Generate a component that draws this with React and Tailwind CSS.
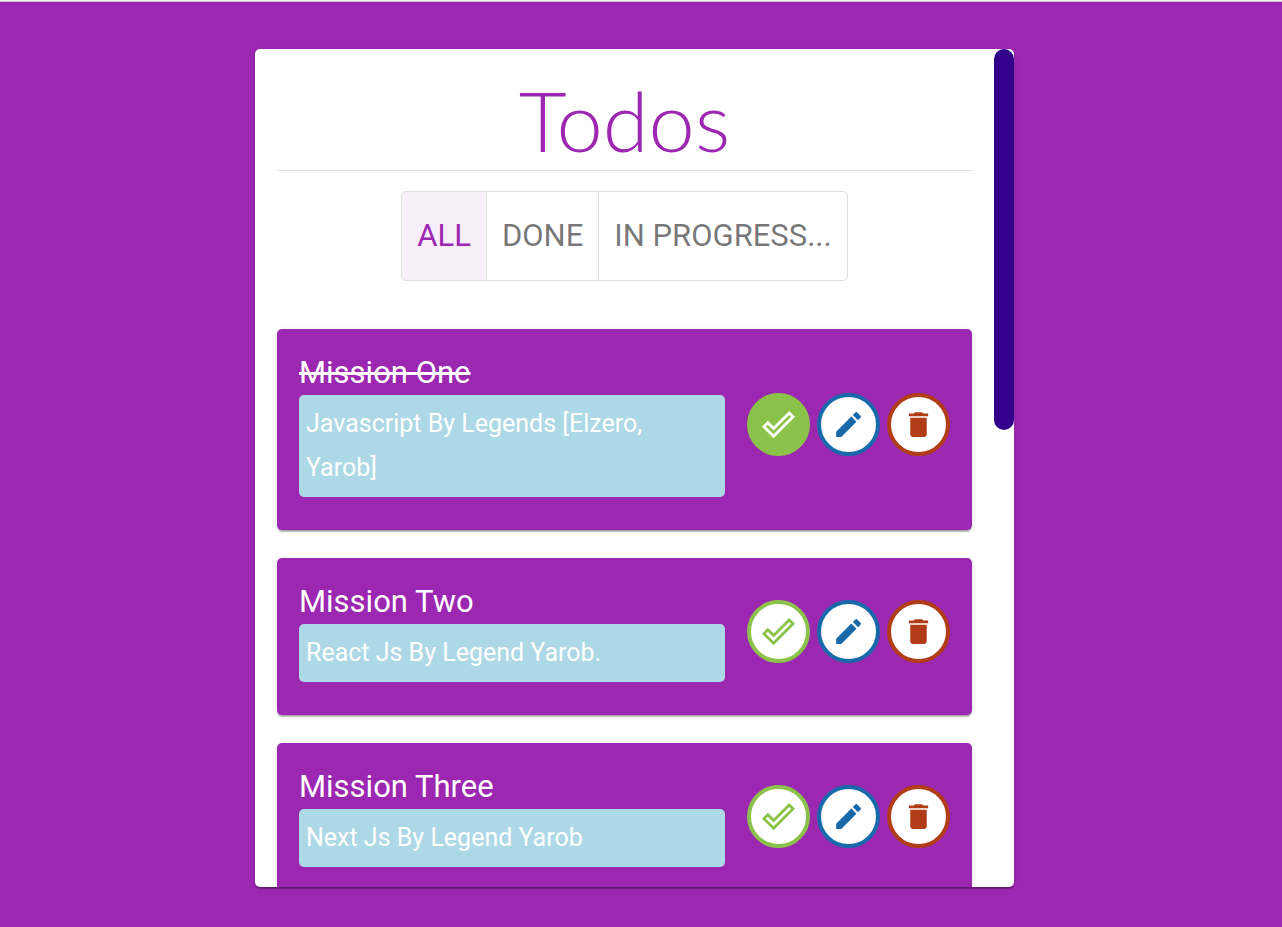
import { useState } from "react";
import { MdDelete, MdDoneOutline, MdEdit } from "react-icons/md";

const initialTodos = [
  { id: 1, title: "Mission One", details: "Javascript By Legends [Elzero, Yarob]", done: true },
  { id: 2, title: "Mission Two", details: "React Js By Legend Yarob.", done: false },
  { id: 3, title: "Mission Three", details: "Next Js By Legend Yarob", done: false },
];

const filters = [
  { key: "all", label: "ALL" },
  { key: "done", label: "DONE" },
  { key: "progress", label: "IN PROGRESS..." },
];

const cardShadow =
  "shadow-[0_3px_1px_-1px_rgba(0,0,0,0.2),0_1px_1px_rgba(0,0,0,0.14),0_1px_4px_rgba(0,0,0,0.12)]";

function IconButton({ label, className, onClick, children }) {
  return (
    <button
      type="button"
      aria-label={label}
      onClick={onClick}
      className={`flex size-[63px] shrink-0 items-center justify-center rounded-full border-4 text-[33px] ${className}`}
    >
      {children}
    </button>
  );
}

function TodoCard({ todo, onToggle, onDelete }) {
  return (
    <li className={`flex shrink-0 items-center gap-[22px] rounded-[5px] bg-[#9c27b0] px-[22px] pt-[22px] pb-[33px] text-white ${cardShadow}`}>
      <div className="min-w-0 flex-1">
        <h2 className={`text-[31px] leading-[44px] ${todo.done ? "line-through" : ""}`}>{todo.title}</h2>
        <p className="rounded-[5px] bg-[#add8e6] p-[7px] text-[25px] leading-[44px]">{todo.details}</p>
      </div>
      <div className="flex gap-[7px]">
        <IconButton
          label="Toggle done"
          onClick={onToggle}
          className={todo.done ? "border-[#8bc34a] bg-[#8bc34a] text-white" : "border-[#8bc34a] bg-white text-[#8bc34a]"}
        >
          <MdDoneOutline />
        </IconButton>
        <IconButton label="Edit" className="border-[#1769aa] bg-white text-[#1769aa]">
          <MdEdit />
        </IconButton>
        <IconButton label="Delete" onClick={onDelete} className="border-[#b23c17] bg-white text-[#b23c17]">
          <MdDelete />
        </IconButton>
      </div>
    </li>
  );
}

export default function App() {
  const [todos, setTodos] = useState(initialTodos);
  const [filter, setFilter] = useState("all");

  const visible = todos.filter((t) => filter === "all" || (filter === "done") === t.done);
  const toggle = (id) => setTodos(todos.map((t) => (t.id === id ? { ...t, done: !t.done } : t)));
  const remove = (id) => setTodos(todos.filter((t) => t.id !== id));

  return (
    <div className="flex h-screen flex-col bg-[#9c27b0] font-['Roboto',sans-serif]">
      <div className="h-[2px] shrink-0 border-b border-[#c9c5cb] bg-[#f3f3f3]" />
      <main className="flex min-h-0 flex-1 justify-center pt-[47px] pr-[13px] pb-10">
        <section className={`flex w-full max-w-[759px] overflow-hidden rounded-[5px] bg-white ${cardShadow}`}>
          <div className="flex min-w-0 flex-1 flex-col overflow-y-auto p-[22px] [scrollbar-width:none]">
            <h1 className="border-b border-black/12 text-center font-['Lato',sans-serif] text-[83px] leading-[99px] font-light text-[#9c27b0]">
              Todos
            </h1>
            <div role="group" aria-label="Filter" className="mx-auto mt-5 flex h-[90px] shrink-0 overflow-hidden rounded-[5px] border border-black/12 text-[31px]">
              {filters.map((f, i) => (
                <button
                  key={f.key}
                  type="button"
                  aria-pressed={filter === f.key}
                  onClick={() => setFilter(f.key)}
                  className={`px-[15px] ${i > 0 ? "border-l border-black/12" : ""} ${
                    filter === f.key ? "bg-[#9c27b0]/8 text-[#9c27b0]" : "text-black/54"
                  }`}
                >
                  {f.label}
                </button>
              ))}
            </div>
            <ul className="mt-12 flex flex-col gap-7">
              {visible.map((t) => (
                <TodoCard key={t.id} todo={t} onToggle={() => toggle(t.id)} onDelete={() => remove(t.id)} />
              ))}
            </ul>
          </div>
          <div aria-hidden="true" className="w-5 shrink-0">
            <div className="h-5/11 rounded-full bg-[#33008b]" />
          </div>
        </section>
      </main>
    </div>
  );
}
